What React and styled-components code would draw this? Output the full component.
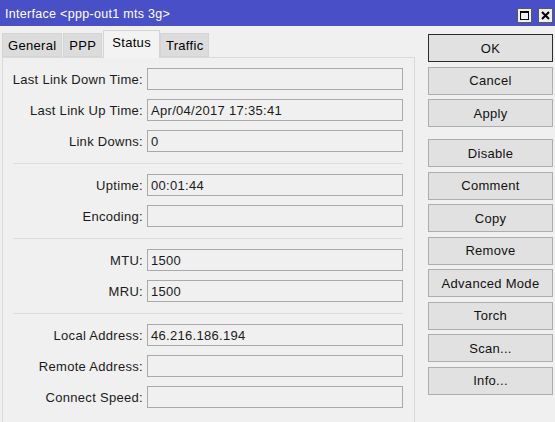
import React from "react";
import styled, { createGlobalStyle } from "styled-components";

const GlobalStyle = createGlobalStyle`
    html, body {
        margin: 0;
        padding: 0;
        background: #f0f0f0;
    }
    body {
        font-family: "Liberation Sans", Arial, sans-serif;
        font-size: 13px;
        letter-spacing: 0.3px;
        color: #000;
    }
`;

const Window = styled.div `
    width: 555px;
    height: 422px;
    background: #f0f0f0;
    display: flex;
    flex-direction: column;
    overflow: hidden;
`;

const TitleBar = styled.div `
    height: 26px;
    flex: none;
    background: #494fc6;
    color: #fff;
    display: flex;
    align-items: center;
    padding: 2px 2px 0 5px;
    box-sizing: border-box;
    font-size: 12.5px;
`;

const Title = styled.div `
    flex: 1;
`;

const Controls = styled.div `
    display: flex;
    gap: 6px;
    align-self: flex-end;
    margin-bottom: 3px;
`;

const ControlBox = styled.div `
    width: 15px;
    height: 15px;
    box-sizing: border-box;
    background: #eeeeee;
    border: 1px solid #5a5a5a;
    display: flex;
    align-items: center;
    justify-content: center;
`;

const Body = styled.div `
    flex: 1;
    display: flex;
    padding: 4px 2px 0 2px;
    min-height: 0;
`;

const Left = styled.div `
    width: 413px;
    display: flex;
    flex-direction: column;
`;

const TabBar = styled.div `
    display: flex;
    align-items: flex-end;
    height: 27px;
    position: relative;
    z-index: 1;
`;

const Tab = styled.div `
    height: ${p => (p.$active ? "28px" : "24px")};
    box-sizing: border-box;
    padding: 0 ${p => (p.$active ? "8px" : "5px")};
    margin-right: ${p => (p.$active ? "0" : "1px")};
    display: flex;
    align-items: center;
    padding-bottom: ${p => (p.$active ? "4px" : "0")};
    background: ${p => (p.$active ? "#f3f3f3" : "#dcdcdc")};
    border: 1px solid #d4d4d4;
    border-bottom: ${p => (p.$active ? "none" : "1px solid #d4d4d4")};
    margin-bottom: ${p => (p.$active ? "-1px" : "0")};
`;

const Panel = styled.div `
    flex: 1;
    border: 1px solid #d9d9d9;
    border-bottom: none;
    padding: 10px 11px 0 7px;
`;

const Group = styled.div `
    display: flex;
    flex-direction: column;
    gap: 9px;
`;

const Divider = styled.div `
    height: 1px;
    background: #dcdcdc;
    margin: 11px 0 10px 3px;
`;

const Row = styled.div `
    display: flex;
    align-items: center;
    height: 22px;
`;

const Label = styled.div `
    width: 133px;
    text-align: right;
    padding-right: 4px;
    flex: none;
    color: #1a1a1a;
    white-space: nowrap;
`;

const Field = styled.div `
    width: 256px;
    height: 22px;
    box-sizing: border-box;
    border: 1px solid #a9a9a9;
    background: #f0f0f0;
    padding: 0 3px;
    display: flex;
    align-items: center;
    color: #1a1a1a;
`;

const Buttons = styled.div `
    margin-left: 13px;
    width: 125px;
    padding-top: 4px;
    display: flex;
    flex-direction: column;
    gap: 4.5px;
`;

const Button = styled.div `
    height: 28px;
    box-sizing: border-box;
    background: #e1e1e1;
    border: 1px solid ${p => (p.$default ? "#2b2b2b" : "#adadad")};
    display: flex;
    align-items: center;
    justify-content: center;
    color: #111;
    margin-top: ${p => (p.$spaced ? "7.5px" : "0")};
`;

const groups = [
    [
        ["Last Link Down Time:", ""],
        ["Last Link Up Time:", "Apr/04/2017 17:35:41"],
        ["Link Downs:", "0"]
    ],
    [
        ["Uptime:", "00:01:44"],
        ["Encoding:", ""]
    ],
    [
        ["MTU:", "1500"],
        ["MRU:", "1500"]
    ],
    [
        ["Local Address:", "46.216.186.194"],
        ["Remote Address:", ""],
        ["Connect Speed:", ""]
    ]
];

const buttons = [
    "OK", "Cancel", "Apply", "Disable", "Comment", "Copy", "Remove",
    "Advanced Mode", "Torch", "Scan...", "Info..."
];

export default function App() {
    return (
        <Window>
            <GlobalStyle/>
            <TitleBar>
                <Title>Interface &lt;ppp-out1 mts 3g&gt;</Title>
                <Controls>
                    <ControlBox>
                        <svg width="11" height="11" viewBox="0 0 11 11">
                            <rect x="1.5" y="1.5" width="8" height="8" fill="none" stroke="#000" strokeWidth="1"/>
                            <line x1="1.5" y1="2.5" x2="9.5" y2="2.5" stroke="#000" strokeWidth="1"/>
                        </svg>
                    </ControlBox>
                    <ControlBox>
                        <svg width="11" height="11" viewBox="0 0 11 11">
                            <path d="M2 2 L9 9 M9 2 L2 9" stroke="#000" strokeWidth="2"/>
                        </svg>
                    </ControlBox>
                </Controls>
            </TitleBar>
            <Body>
                <Left>
                    <TabBar>
                        <Tab>General</Tab>
                        <Tab>PPP</Tab>
                        <Tab $active>Status</Tab>
                        <Tab>Traffic</Tab>
                    </TabBar>
                    <Panel>
                        {groups.map((g, i) => (
                            <React.Fragment key={i}>
                                {i > 0 && <Divider/>}
                                <Group>
                                    {g.map(([label, value]) => (
                                        <Row key={label}>
                                            <Label>{label}</Label>
                                            <Field>{value}</Field>
                                        </Row>
                                    ))}
                                </Group>
                            </React.Fragment>
                        ))}
                    </Panel>
                </Left>
                <Buttons>
                    {buttons.map((b, i) => (
                        <Button key={b} $default={i === 0} $spaced={b === "Disable"}>{b}</Button>
                    ))}
                </Buttons>
            </Body>
        </Window>
    );
}
